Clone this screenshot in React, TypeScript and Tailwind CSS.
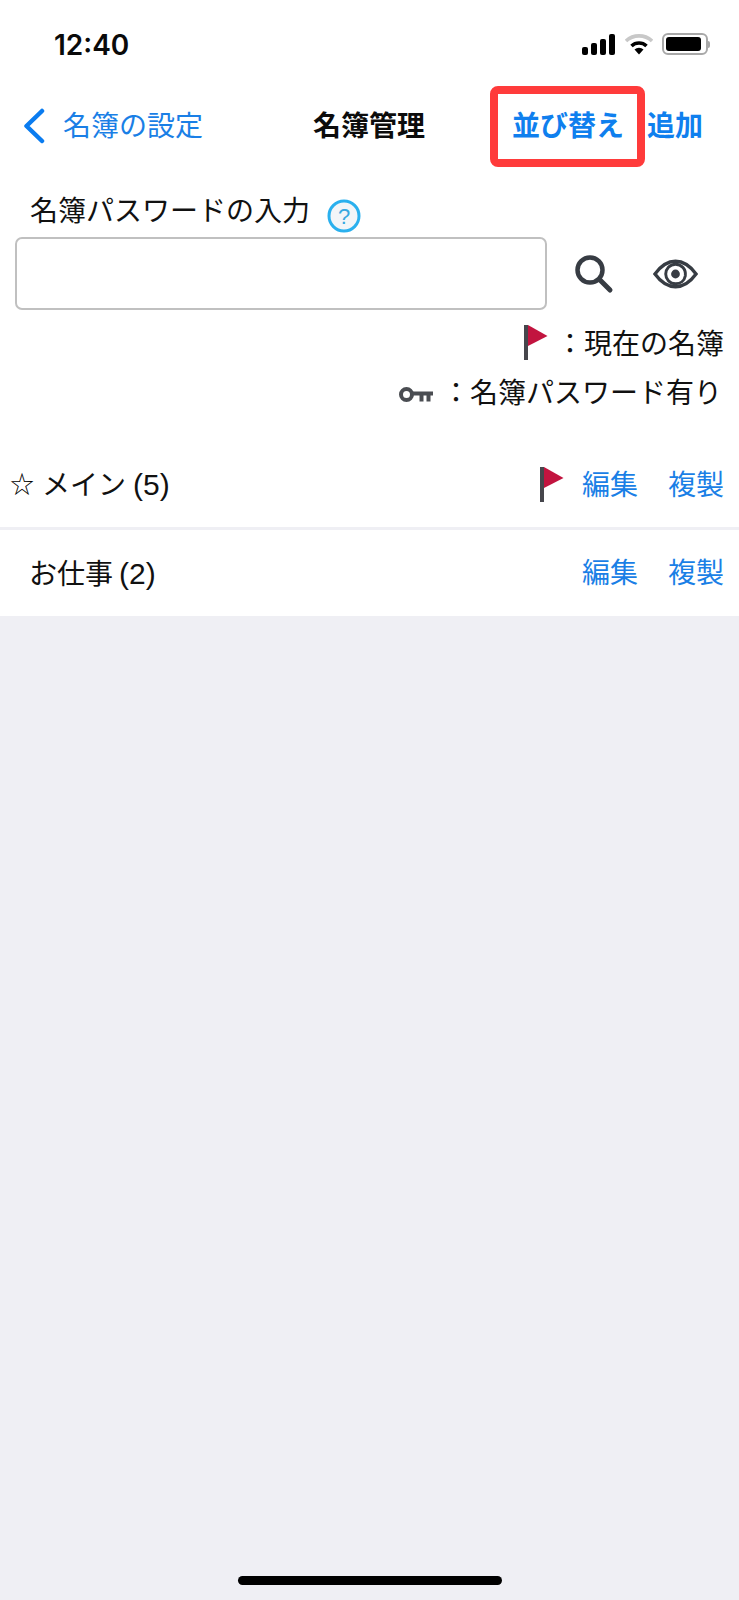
import React from "react";

const FONT = { fontFamily: '"Liberation Sans", "Noto Sans CJK JP", sans-serif' };

function Flag() {
  return (
    <svg width="24" height="35" viewBox="0 0 24 35" className="shrink-0">
      <rect x="0" y="0" width="4" height="35" fill="#46464c" />
      <path d="M4 0 L23.5 11 L4 21 Z" fill="#c2143f" />
    </svg>
  );
}

function Row({ star, label, count, flag, h }: { star?: boolean; label: string; count: string; flag?: boolean; h: string }) {
  return (
    <div className={`flex items-center bg-white text-[28px] leading-none ${h}`}>
      {star ? (
        <>
          <span className="w-[24px] ml-[10px] text-[24px] text-black">☆</span>
          <span className="ml-[8px] pt-[1px] text-[#111]">
            {label}
            <span className="ml-[7px] text-[30px]">{count}</span>
          </span>
        </>
      ) : (
        <span className="ml-[29px] pt-[2px] text-[#111]">
          {label}
          <span className="ml-[6px] text-[30px]">{count}</span>
        </span>
      )}
      <div className="ml-auto flex items-center mr-[15px] text-[#1a7fe6]">
        {flag && (
          <span className="mr-[18px] flex">
            <Flag />
          </span>
        )}
        <span className="pt-[2px]">編集</span>
        <span className="ml-[30px] pt-[2px]">複製</span>
      </div>
    </div>
  );
}

export default function App() {
  return (
    <div style={FONT} className="w-[739px] h-[1600px] bg-[#efeff4] flex flex-col overflow-hidden">
      <div className="bg-white">
        {/* status bar */}
        <div className="h-[86px] flex items-start">
          <span style={{ fontFamily: "Inter, sans-serif" }} className="ml-[54px] mt-[28px] text-[28px] leading-[34px] font-semibold text-[#0a0a0a]">
            12:40
          </span>
          <div className="ml-auto mr-[29px] mt-[33px] flex items-center">
            <svg width="34" height="21" viewBox="0 0 34 21">
              <rect x="0" y="13" width="6" height="8" rx="2" fill="#000" />
              <rect x="9" y="9" width="6" height="12" rx="2" fill="#000" />
              <rect x="18" y="5" width="6" height="16" rx="2" fill="#000" />
              <rect x="27" y="0" width="6" height="21" rx="2" fill="#000" />
            </svg>
            <svg width="28" height="21" viewBox="0 0 28 21" className="ml-[9px]">
              <path d="M1 7 A19 19 0 0 1 27 7" stroke="#c8c8c8" strokeWidth="3.6" fill="none" />
              <path d="M6.5 12 A11 11 0 0 1 21.5 12" stroke="#000" strokeWidth="3.6" fill="none" />
              <path d="M14 20.5 L9.5 15.5 A6.5 6.5 0 0 1 18.5 15.5 Z" fill="#000" />
            </svg>
            <div className="ml-[9px] flex items-center">
              <div className="w-[46px] h-[22px] rounded-[6px] border-2 border-[#a8a8a8] p-[2px]">
                <div className="w-[35px] h-full rounded-[3px] bg-black" />
              </div>
              <div className="w-[2px] h-[7px] bg-[#a8a8a8] rounded-r-[2px]" />
            </div>
          </div>
        </div>

        {/* nav */}
        <div className="h-[80px] flex items-center text-[28px] leading-none">
          <svg width="24" height="36" viewBox="0 0 24 36" className="ml-[22px]">
            <path d="M20 3 L4.5 18 L20 33" stroke="#0a7cf0" strokeWidth="4.5" fill="none" strokeLinecap="round" strokeLinejoin="round" />
          </svg>
          <span className="ml-[17px] pt-[2px] text-[#1a7fe6]">名簿の設定</span>
          <span className="ml-[110px] pt-[2px] font-bold text-[#0c0c0c]">名簿管理</span>
          <div className="ml-[65px] w-[155px] h-[81px] border-[8px] border-[#ff3b3b] rounded-[8px] flex items-center justify-center pt-[2px] pl-[1px] font-bold text-[#0f7fee]">
            並び替え
          </div>
          <span className="ml-[2px] pt-[2px] font-bold text-[#0f7fee]">追加</span>
        </div>

        {/* password label */}
        <div className="h-[71px] flex items-center pl-[30px] pt-[20px]">
          <span className="text-[28px] leading-none text-[#111]">名簿パスワードの入力</span>
          <svg width="34" height="34" viewBox="0 0 34 34" className="ml-[17px] mt-[8px]">
            <circle cx="17" cy="17" r="15" fill="#f2f5f8" stroke="#2ab0ee" strokeWidth="3" />
            <text x="17" y="25" textAnchor="middle" fontSize="22" fill="#38a8e0" fontFamily="Liberation Sans">?</text>
          </svg>
        </div>

        {/* input row */}
        <div className="flex items-center">
          <div className="ml-[15px] w-[532px] h-[73px] rounded-[7px] border-2 border-[#c0c0c0] bg-white" />
          <svg width="40" height="40" viewBox="0 0 40 40" className="ml-[27px] mt-[1px]">
            <circle cx="16" cy="16" r="12.5" fill="none" stroke="#373c43" strokeWidth="4.5" />
            <path d="M25.5 25.5 L36 36" stroke="#373c43" strokeWidth="5" strokeLinecap="round" />
          </svg>
          <svg width="45" height="30" viewBox="0 0 46 30" className="ml-[39px]">
            <path d="M2 15 C10 4 17 2 23 2 C29 2 36 4 44 15 C36 26 29 28 23 28 C17 28 10 26 2 15 Z" fill="none" stroke="#373c43" strokeWidth="3.4" />
            <path d="M23 5 C29 5 34 10 33 17 C32 22 28 25 23 25 C17 25 13 20 13 15 C13 10 17 5 23 5 Z" fill="none" stroke="#373c43" strokeWidth="3" />
            <circle cx="23" cy="15" r="4.5" fill="#373c43" />
          </svg>
        </div>

        {/* legend */}
        <div className="flex items-center justify-end h-[34px] mt-[15px] text-[28px] leading-none text-[#111]">
          <Flag />
          <span className="ml-[8px] mr-[15px] pt-[6px]">：現在の名簿</span>
        </div>
        <div className="flex items-center justify-end h-[34px] mt-[18px] text-[28px] leading-none text-[#111]">
          <svg width="34" height="15" viewBox="0 0 34 15" className="shrink-0">
            <circle cx="7.5" cy="7.5" r="5.5" fill="none" stroke="#4a4d52" strokeWidth="4" />
            <path d="M12 4.5 H34 V8.5 H31.5 V14.5 H27.5 V8.5 H24.5 V14.5 H20.5 V8.5 H12 Z" fill="#4a4d52" />
          </svg>
          <span className="ml-[9px] mr-[17px]">：名簿パスワード有り</span>
        </div>

        <div className="h-[31px]" />
      </div>

      <div className="flex flex-col gap-[3px]">
        <Row star label="メイン" count="(5)" flag h="h-[85px]" />
        <Row label="お仕事" count="(2)" h="h-[86px]" />
      </div>

      <div className="mt-auto mb-[15px] mx-auto w-[264px] h-[9px] rounded-full bg-black" />
    </div>
  );
}
